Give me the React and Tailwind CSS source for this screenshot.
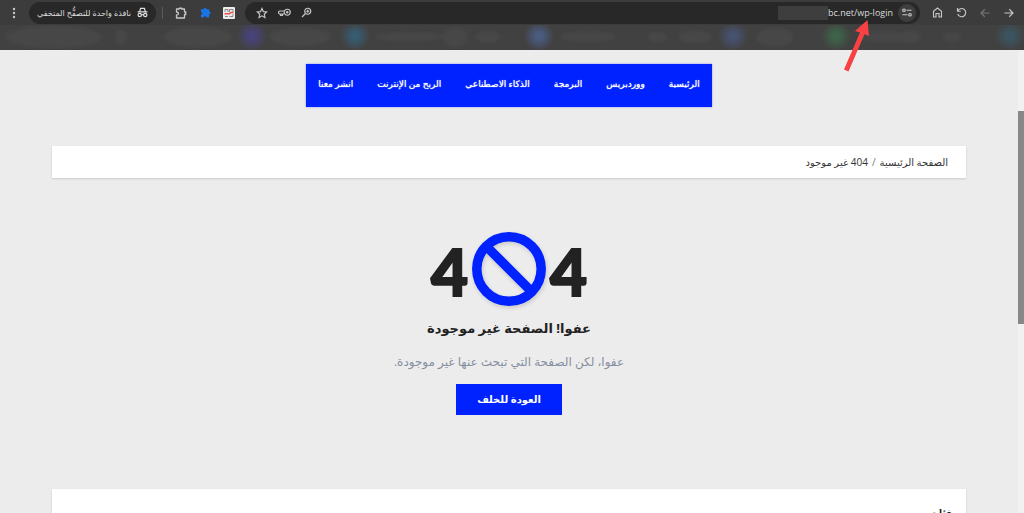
import React from "react";

const navItems = ["الرئيسية", "ووردبريس", "البرمجة", "الذكاء الاصطناعي", "الربح من الإنترنت", "انشر معنا"];

function IconButton({ label, children, className = "" }) {
  return (
    <button type="button" aria-label={label} className={`flex size-6 shrink-0 items-center justify-center ${className}`}>
      {children}
    </button>
  );
}

function Toolbar() {
  return (
    <div className="flex h-[25px] items-center bg-[#3c3c3c] text-[#c7c7c7]">
      <IconButton label="القائمة" className="ml-0.5">
        <svg viewBox="0 0 12 12" className="size-3" fill="currentColor" aria-hidden="true">
          <circle cx="6" cy="2" r="1.200" />
          <circle cx="6" cy="6" r="1.200" />
          <circle cx="6" cy="10" r="1.200" />
        </svg>
      </IconButton>
      <div className="ml-[3px] flex h-[22px] w-[127px] shrink-0 items-center justify-center gap-1.5 rounded-full bg-[#282828]">
        <span dir="rtl" className="whitespace-nowrap text-[8px] leading-4 text-[#dedede]">نافذة واحدة للتصفُّح المتخفي</span>
        <svg viewBox="0 0 20 20" className="size-[11px] shrink-0 text-[#dedede]" fill="none" stroke="currentColor" strokeWidth="2.200" aria-hidden="true">
          <path d="M5 8 6.500 2.500h7L15 8M1 9h18" />
          <circle cx="5" cy="14.500" r="3" />
          <circle cx="15" cy="14.500" r="3" />
          <path d="M8 14h4" />
        </svg>
      </div>
      <span className="ml-1.5 h-3 w-px bg-[#5a5a5a]" />
      <IconButton label="الإضافات" className="ml-1.5">
        <svg viewBox="0 0 24 24" className="size-3" fill="none" stroke="currentColor" strokeWidth="2.600" strokeLinejoin="round" aria-hidden="true">
          <path d="M3 4h5.500V2.500h5V4H19v6h2.500v5H19v7H3v-6c3 0 4-1.200 4-3s-1-3-4-3Z" />
        </svg>
      </IconButton>
      <IconButton label="إضافة" className="text-[#1a73e8]">
        <svg viewBox="0 0 24 24" className="size-[11px]" fill="currentColor" aria-hidden="true">
          <path d="M2 5h6a3 3 0 1 1 6 0h6v5a3 3 0 1 1 0 6v7h-6a3 3 0 0 0-6 0H2v-6a3 3 0 0 0 0-6Z" />
        </svg>
      </IconButton>
      <IconButton label="إضافة مثبتة">
        <svg viewBox="0 0 12 12" className="size-3" aria-hidden="true">
          <rect width="12" height="12" rx="1" fill="#ececec" />
          <path d="M2 5V2.500h3V5M6.500 2.500H10V5M6.500 2.500V5M2 9.500h3M6.500 9.500H10V7" fill="none" stroke="#7d7d7d" strokeWidth="0.900" />
          <path d="M1.500 6.800h5L8 5.500h2.500" fill="none" stroke="#ef4d4d" strokeWidth="1.400" />
        </svg>
      </IconButton>
      <div className="ml-1 flex h-[22px] min-w-0 flex-1 items-center rounded-full bg-[#282828] px-1">
        <IconButton label="إضافة إشارة" className="ml-px">
          <svg viewBox="0 0 24 24" className="size-3" fill="none" stroke="currentColor" strokeWidth="2.300" aria-hidden="true">
            <path d="m12 3 2.800 6.200 6.700.7-5 4.500 1.400 6.600L12 17.600 6.100 21l1.400-6.600-5-4.500 6.700-.7Z" />
          </svg>
        </IconButton>
        <IconButton label="كلمات المرور" className="-ml-0.5">
          <svg viewBox="0 0 26 18" className="h-[9px] w-[13px]" fill="none" stroke="currentColor" strokeWidth="2.400" aria-hidden="true">
            <circle cx="18.500" cy="8.500" r="6" />
            <circle cx="18.500" cy="8.500" r="1.400" />
            <path d="M12 6H4a3 3 0 0 0 0 6h8M5 12v3h4v-4" />
          </svg>
        </IconButton>
        <IconButton label="تكبير" className="-ml-0.5">
          <svg viewBox="0 0 22 22" className="size-[11px]" fill="none" stroke="currentColor" strokeWidth="2.400" aria-hidden="true">
            <circle cx="13.500" cy="8.500" r="6" />
            <path d="M9 13l-7 7M10.500 8.500h6M13.500 5.500v6" />
          </svg>
        </IconButton>
        <span className="flex-1" />
        <span className="h-3.5 w-[50px] bg-[#3e3e3e]" />
        <span className="relative text-[9px] leading-4 text-[#dcdcdc]">
          bc.net/wp-login
          <svg viewBox="0 0 28 56" className="absolute right-6 top-3 z-10 h-14 w-7" fill="#f94144" aria-hidden="true">
            <path d="m26.500 3 1.500 16-4.500-1.700L7.500 54.500 3 52.500 19 15.500l-5-1.500Z" />
          </svg>
        </span>
        <span className="ml-[5px] flex size-[18px] shrink-0 items-center justify-center rounded-full bg-[#3e3e3e]">
          <svg viewBox="0 0 20 18" className="h-[9px] w-2.5" fill="none" stroke="currentColor" strokeWidth="2.400" aria-hidden="true">
            <circle cx="4" cy="4.500" r="2.500" />
            <path d="M9 4.500h10M1 13.500h10" />
            <circle cx="16" cy="13.500" r="2.500" />
          </svg>
        </span>
      </div>
      <IconButton label="الصفحة الرئيسية" className="ml-[5px]">
        <svg viewBox="0 0 22 22" className="size-[11px]" fill="none" stroke="currentColor" strokeWidth="2.200" aria-hidden="true">
          <path d="M3 8.500 11 2l8 6.500V20h-5v-7H8v7H3Z" />
        </svg>
      </IconButton>
      <IconButton label="إعادة التحميل">
        <svg viewBox="0 0 22 22" className="size-[11px]" fill="none" stroke="currentColor" strokeWidth="2.300" aria-hidden="true">
          <path d="M3 2v6.500h6.500M3.500 8.500A8.200 8.200 0 1 1 3.500 14" />
        </svg>
      </IconButton>
      <IconButton label="إلى الأمام" className="text-[#777777]">
        <svg viewBox="0 0 20 20" className="size-2.5" fill="none" stroke="currentColor" strokeWidth="2.300" aria-hidden="true">
          <path d="M19 10H2M9.500 2.500 2 10l7.500 7.500" />
        </svg>
      </IconButton>
      <IconButton label="رجوع" className="mr-[3px]">
        <svg viewBox="0 0 20 20" className="size-2.5" fill="none" stroke="currentColor" strokeWidth="2.300" aria-hidden="true">
          <path d="M1 10h17M10.500 2.500 18 10l-7.500 7.500" />
        </svg>
      </IconButton>
    </div>
  );
}

function BookmarksBar() {
  const glows = [
    [252, "#48437a"],
    [355, "#385b70"],
    [539, "#4a5b80"],
    [733, "#475270"],
    [836, "#3d6448"],
    [1010, "#3b5560"],
  ];
  const smudges = [
    [54, 48, 11],
    [121, 6, 7],
    [198, 34, 10],
    [300, 30, 9],
    [410, 34, 4],
    [455, 12, 10],
    [488, 12, 6],
    [588, 28, 5],
    [657, 9, 5],
    [695, 16, 6],
    [775, 18, 9],
    [885, 26, 5],
    [910, 10, 6],
    [952, 10, 4],
  ];
  return (
    <svg viewBox="0 0 1024 25" preserveAspectRatio="none" className="block h-[25px] w-full bg-[#414141]" aria-hidden="true">
      <defs>
        <filter id="soft" x="-20%" y="-50%" width="140%" height="200%">
          <feGaussianBlur stdDeviation="1.500" />
        </filter>
        {glows.map(([x, color]) => (
          <radialGradient key={x} id={`glow-${x}`}>
            <stop offset="0.200" stopColor={color} />
            <stop offset="1" stopColor={color} stopOpacity="0" />
          </radialGradient>
        ))}
      </defs>
      {smudges.map(([x, rx, ry]) => (
        <ellipse key={x} cx={x} cy="12" rx={rx} ry={ry} fill="#474747" filter="url(#soft)" />
      ))}
      {glows.map(([x]) => (
        <circle key={x} cx={x} cy="11" r="15" fill={`url(#glow-${x})`} />
      ))}
    </svg>
  );
}

export default function App() {
  return (
    <div className="flex h-screen flex-col overflow-hidden bg-[#ececec] font-['Open_Sans','DejaVu_Sans',sans-serif]">
      <header>
        <Toolbar />
        <BookmarksBar />
      </header>
      <div className="flex min-h-0 flex-1">
        <div dir="rtl" className="flex min-w-0 flex-1 flex-col overflow-hidden px-[52px] pt-3.5">
          <nav className="flex h-[43px] shrink-0 items-start self-center bg-[#0022ff] pt-3 shadow-[0_0_2px_#0022ff66]">
            {navItems.map((item) => (
              <a key={item} href="#" className="whitespace-nowrap px-3 text-[9px] leading-4 text-white [text-shadow:0_0_1px_white]">
                {item}
              </a>
            ))}
          </nav>

          <nav aria-label="مسار التنقل" className="mt-[39px] flex h-8 shrink-0 items-center gap-1 bg-white px-[18px] text-[10px] text-[#333333] shadow-[0_1px_2px_#00000026]">
            <a href="#">الصفحة الرئيسية</a>
            <span className="text-[#777777]">/</span>
            <span>404 غير موجود</span>
          </nav>

          <main className="mt-[54px] flex shrink-0 flex-col items-center">
            <div dir="ltr" role="img" aria-label="404" className="flex h-[74px] items-center gap-1 font-['Lato',sans-serif] text-[64px] font-black leading-[74px] text-[#222222] [-webkit-text-stroke:2px_#222222]">
              <span className="pt-1.5">4</span>
              <svg viewBox="0 0 74 74" className="size-[74px] drop-shadow-[1px_2px_2px_#00000026]" fill="none" stroke="#0022ff" strokeWidth="9.500" aria-hidden="true">
                <circle cx="37" cy="37" r="32.200" />
                <path d="M15 15 59 59" />
              </svg>
              <span className="pt-1.5">4</span>
            </div>
            <h1 className="mt-2.5 text-[13px] font-bold leading-6 text-[#222222]">عفوا! الصفحة غير موجودة</h1>
            <p className="mt-3 text-[12px] leading-5 text-[#8690a2]">عفوا، لكن الصفحة التي تبحث عنها غير موجودة.</p>
            <a href="#" className="mt-3 flex h-[31px] w-[106px] items-center justify-center bg-[#0022ff] text-[10px] font-bold text-white">
              العودة للخلف
            </a>
          </main>

          <section className="mt-[74px] shrink-0 bg-white px-[14px] pb-4 pt-4 shadow-[0_1px_2px_#00000026]">
            <h2 className="text-[9px] font-bold leading-4 text-[#222222]">فئات</h2>
          </section>
        </div>
        <div className="flex w-1.5 shrink-0 flex-col bg-[#f1f1f1] pt-[61px]">
          <div className="h-[213px] bg-[#888888]" />
        </div>
      </div>
    </div>
  );
}
